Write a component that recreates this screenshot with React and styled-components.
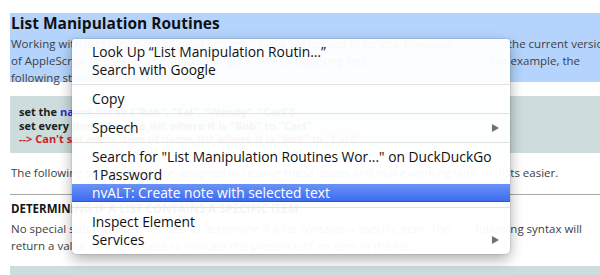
import React from "react";
import styled, { createGlobalStyle } from "styled-components";

const GlobalStyle = createGlobalStyle`
  html, body { margin: 0; padding: 0; background: #ffffff; overflow: hidden; }
  #root { width: 600px; height: 275px; }
`;

const Page = styled.div`
  position: relative;
  width: 600px;
  height: 275px;
  overflow: hidden;
  background: #ffffff;
  font-family: "Open Sans", "DejaVu Sans", sans-serif;
`;

const Article = styled.div`
  width: 700px;
  padding: 13px 0 0 10px;
`;

const Selected = styled.div`
  background: #b4d4fd;
  height: 69px;
`;

const Heading = styled.h2`
  margin: 0 0 2px 0;
  padding-left: 1px;
  font-size: 15.5px;
  font-weight: 700;
  line-height: 20px;
  color: #111111;
  white-space: nowrap;
`;

const Line = styled.div`
  display: flex;
  padding-left: 1px;
  font-size: 11.5px;
  line-height: 17px;
  color: #404040;
  white-space: nowrap;
  margin-top: ${(p) => p.$mt || 0}px;
  font-weight: ${(p) => (p.$bold ? 700 : 400)};
  ${(p) => p.$bold && "color: #151515;"}
`;

const Lead = styled.span`
  flex: 0 0 ${(p) => p.$w}px;
  overflow: hidden;
`;

const CodeBox = styled.div`
  margin-top: 14px;
  background: #cddcdc;
  padding: 9px 9px 7.5px;
  font-size: 11px;
  font-weight: 700;
  line-height: 13.5px;
  color: #1e1e1e;
  white-space: nowrap;
`;

const Kw = styled.span`
  color: ${(p) => p.$c};
`;

const Rule = styled.div`
  margin-top: 13px;
  height: 1px;
  background: #a9a9a9;
`;

const BottomBox = styled.div`
  margin-top: 12px;
  height: 40px;
  background: #cddcdc;
`;

const Menu = styled.div`
  position: absolute;
  left: 72px;
  top: 39px;
  width: 438px;
  padding: 4px 0 5px;
  background: rgba(255, 255, 255, 0.955);
  border-radius: 3px 3px 5px 5px;
  box-shadow: 0 0 0 1px rgba(0, 0, 0, 0.07), 0 5px 14px rgba(0, 0, 0, 0.33);
  font-family: "Open Sans", "DejaVu Sans", sans-serif;
`;

const Item = styled.div`
  display: flex;
  align-items: center;
  justify-content: space-between;
  height: 18px;
  padding: 0 11px 0 20px;
  font-size: 13.8px;
  line-height: 18px;
  white-space: nowrap;
  color: ${(p) => (p.$active ? "#ffffff" : "#111111")};
  background: ${(p) =>
    p.$active ? "linear-gradient(to bottom, #6a93f6 0%, #3a69ef 100%)" : "transparent"};
  box-shadow: ${(p) => (p.$active ? "inset 0 -1px 0 #2a58d8" : "none")};
`;

const Arrow = styled.span`
  width: 0;
  height: 0;
  border-top: 4.5px solid transparent;
  border-bottom: 4.5px solid transparent;
  border-left: 7px solid #6f6f6f;
`;

const Separator = styled.div`
  height: 1px;
  margin: 5px 0;
  background: #e2e2e2;
`;

export default function App() {
  return (
    <Page>
      <GlobalStyle />
      <Article>
        <Selected>
          <Heading>List Manipulation Routines</Heading>
          <Line>
            <Lead $w={497}>Working with lists is one of the most common tasks performed in scripts. However,</Lead>
            <span>the current version of</span>
          </Line>
          <Line>
            <Lead $w={479}>of AppleScript has some limitations and quirks when targeting lists.</Lead>
            <span>For example, the</span>
          </Line>
          <Line>following statements will not work:</Line>
        </Selected>
        <CodeBox>
          <div>
            set the <Kw $c="#2a2ad0">name_list</Kw> to {"{"}"Rob", "Sal", "Wendy", "Carl"{"}"}
          </div>
          <div>set every item of name_list where it is "Bob" to "Carl"</div>
          <div>
            <Kw $c="#cc1f1f">--&gt; Can't set every item of name_list where it is "Bob" to "Carl"</Kw>
          </div>
        </CodeBox>
        <Line $mt={11}>
          <Lead $w={488}>The following sub-routines are designed to resolve these issues and make working with</Lead>
          <span>lists easier.</span>
        </Line>
        <Rule />
        <Line $mt={5} $bold>
          DETERMINING IF A LIST CONTAINS A SPECIFIC ITEM
        </Line>
        <Line $mt={3}>
          <Lead $w={464}>No special sub-routine is needed to determine if a list contains a specific item. The</Lead>
          <span>following syntax will</span>
        </Line>
        <Line>return a value of true or false to indicate the presence of an item in the list:</Line>
        <BottomBox />
      </Article>
      <Menu>
        <Item>Look Up “List Manipulation Routin…”</Item>
        <Item>Search with Google</Item>
        <Separator />
        <Item>Copy</Item>
        <Separator />
        <Item>
          Speech
          <Arrow />
        </Item>
        <Separator />
        <Item>Search for "List Manipulation Routines Wor..." on DuckDuckGo</Item>
        <Item>1Password</Item>
        <Item $active>nvALT: Create note with selected text</Item>
        <Separator />
        <Item>Inspect Element</Item>
        <Item>
          Services
          <Arrow />
        </Item>
      </Menu>
    </Page>
  );
}
